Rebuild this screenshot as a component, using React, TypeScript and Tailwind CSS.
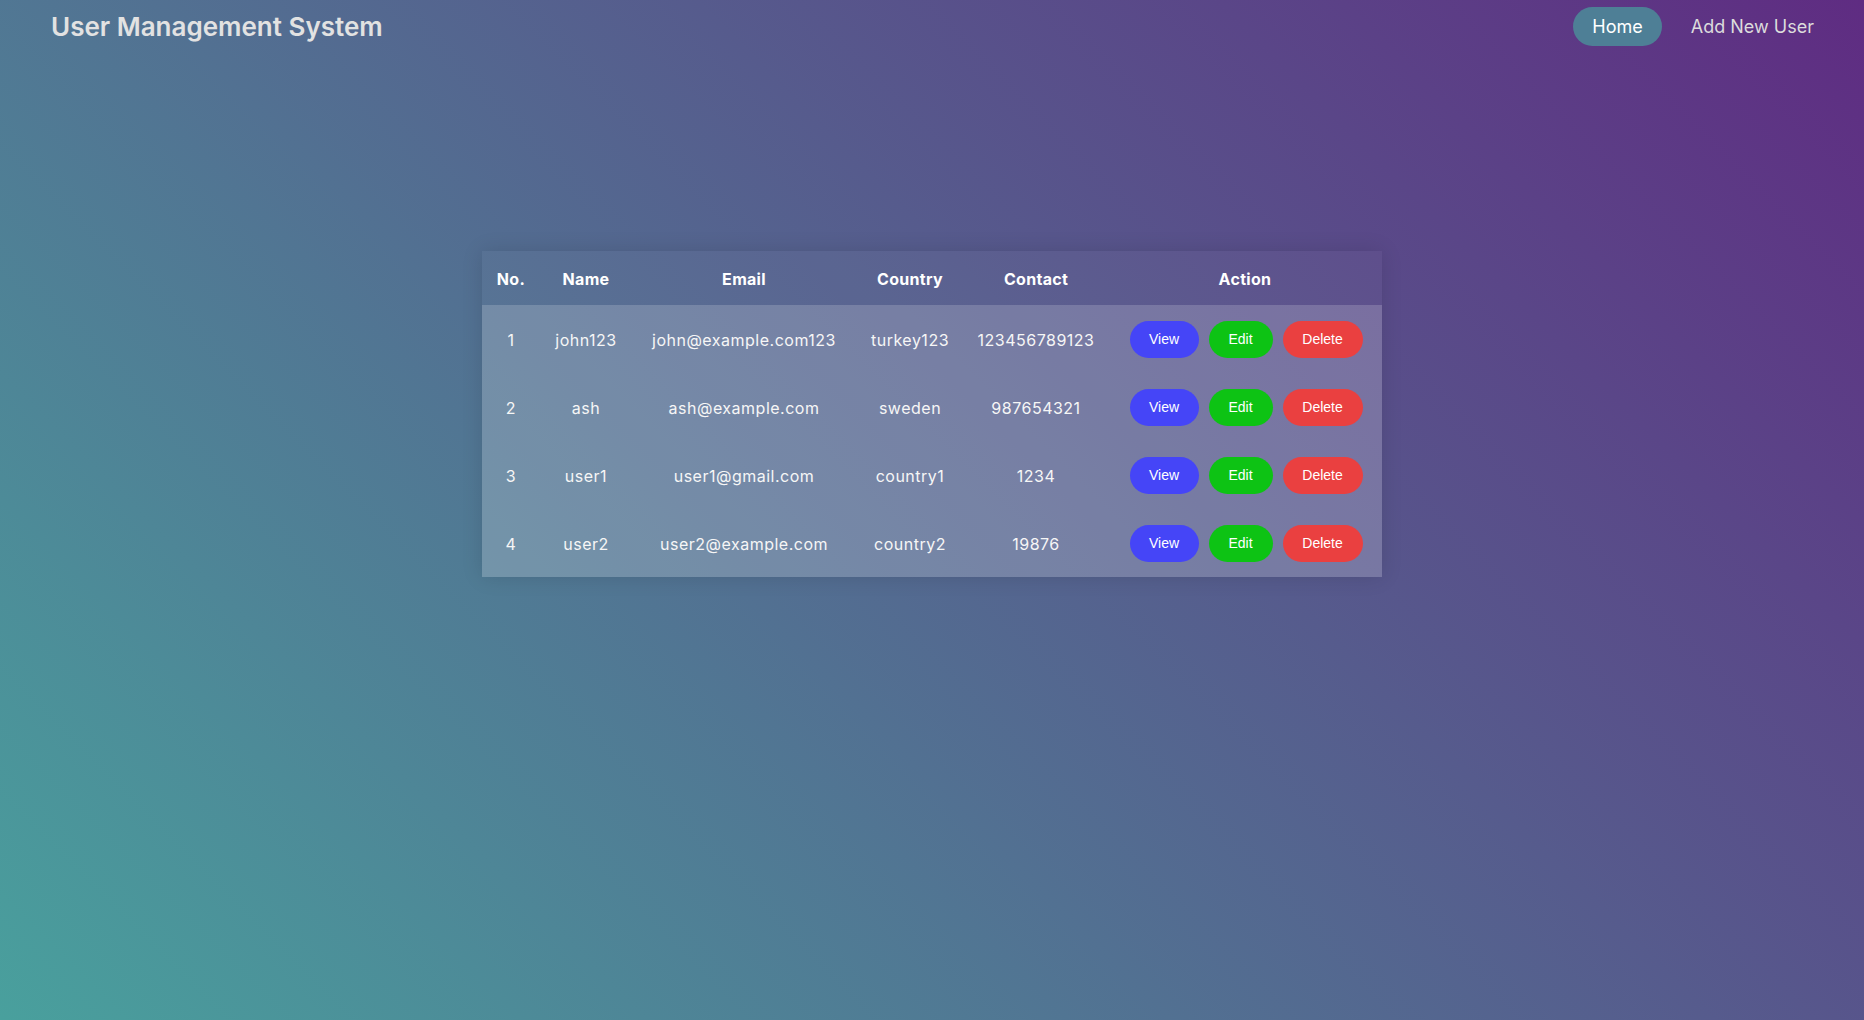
import React from "react";

const users = [
  { id: 1, name: "john123", email: "john@example.com123", country: "turkey123", contact: "123456789123" },
  { id: 2, name: "ash", email: "ash@example.com", country: "sweden", contact: "987654321" },
  { id: 3, name: "user1", email: "user1@gmail.com", country: "country1", contact: "1234" },
  { id: 4, name: "user2", email: "user2@example.com", country: "country2", contact: "19876" },
];

export default function App() {
  return (
    <div
      className="min-h-screen h-[1020px] w-full bg-[linear-gradient(45deg,#49a09d,#5f2c82)] flex flex-col"
      style={{ fontFamily: "Inter, 'Open Sans', sans-serif" }}
    >
      <header className="h-[53px] flex items-center justify-between pl-[51px] pr-[50px]">
        <h1 className="text-[26px] font-semibold text-[#e2e2e2]">User Management System</h1>
        <nav className="flex items-center gap-[10px]">
          <a className="h-[39px] px-[19px] flex items-center rounded-full bg-[#4e7f96] text-white text-[18px]">Home</a>
          <a className="h-[39px] pl-[19px] flex items-center text-[#dcdcdc] text-[18px]">Add New User</a>
        </nav>
      </header>
      <main className="flex justify-center pt-[198px]">
        <table className="border-collapse shadow-[0_0_20px_rgba(0,0,0,0.12)] text-white table-fixed w-[900px]">
          <colgroup>
            <col className="w-[58px]" />
            <col className="w-[92px]" />
            <col className="w-[224px]" />
            <col className="w-[108px]" />
            <col className="w-[144px]" />
            <col className="w-[274px]" />
          </colgroup>
          <thead>
            <tr className="h-[54px] bg-white/[0.03] text-[16px] font-semibold tracking-[0.3px]">
              <th className="text-center pt-[2px]">No.</th>
              <th className="text-center pt-[2px]">Name</th>
              <th className="text-center pt-[2px]">Email</th>
              <th className="text-center pt-[2px]">Country</th>
              <th className="text-center pt-[2px]">Contact</th>
              <th className="text-center pt-[2px]">Action</th>
            </tr>
          </thead>
          <tbody className="bg-white/20 text-[16px] tracking-[0.5px] text-[#f6f6f6]">
            {users.map((u) => (
              <tr key={u.id} className="h-[68px]">
                <td className="text-center pt-[2px]">{u.id}</td>
                <td className="text-center pt-[2px]">{u.name}</td>
                <td className="text-center pt-[2px]">{u.email}</td>
                <td className="text-center pt-[2px]">{u.country}</td>
                <td className="text-center pt-[2px]">{u.contact}</td>
                <td className="text-center">
                  <div
                    className="flex items-center justify-center gap-[10px] text-[14px] tracking-normal pl-[2px]"
                    style={{ fontFamily: "'Liberation Sans', Arial, sans-serif" }}
                  >
                    <button className="h-[37px] w-[69px] rounded-full bg-[#4545f7] text-white">View</button>
                    <button className="h-[37px] w-[64px] rounded-full bg-[#0dc314] text-white">Edit</button>
                    <button className="h-[37px] w-[80px] rounded-full bg-[#ea4040] text-white">Delete</button>
                  </div>
                </td>
              </tr>
            ))}
          </tbody>
        </table>
      </main>
    </div>
  );
}
